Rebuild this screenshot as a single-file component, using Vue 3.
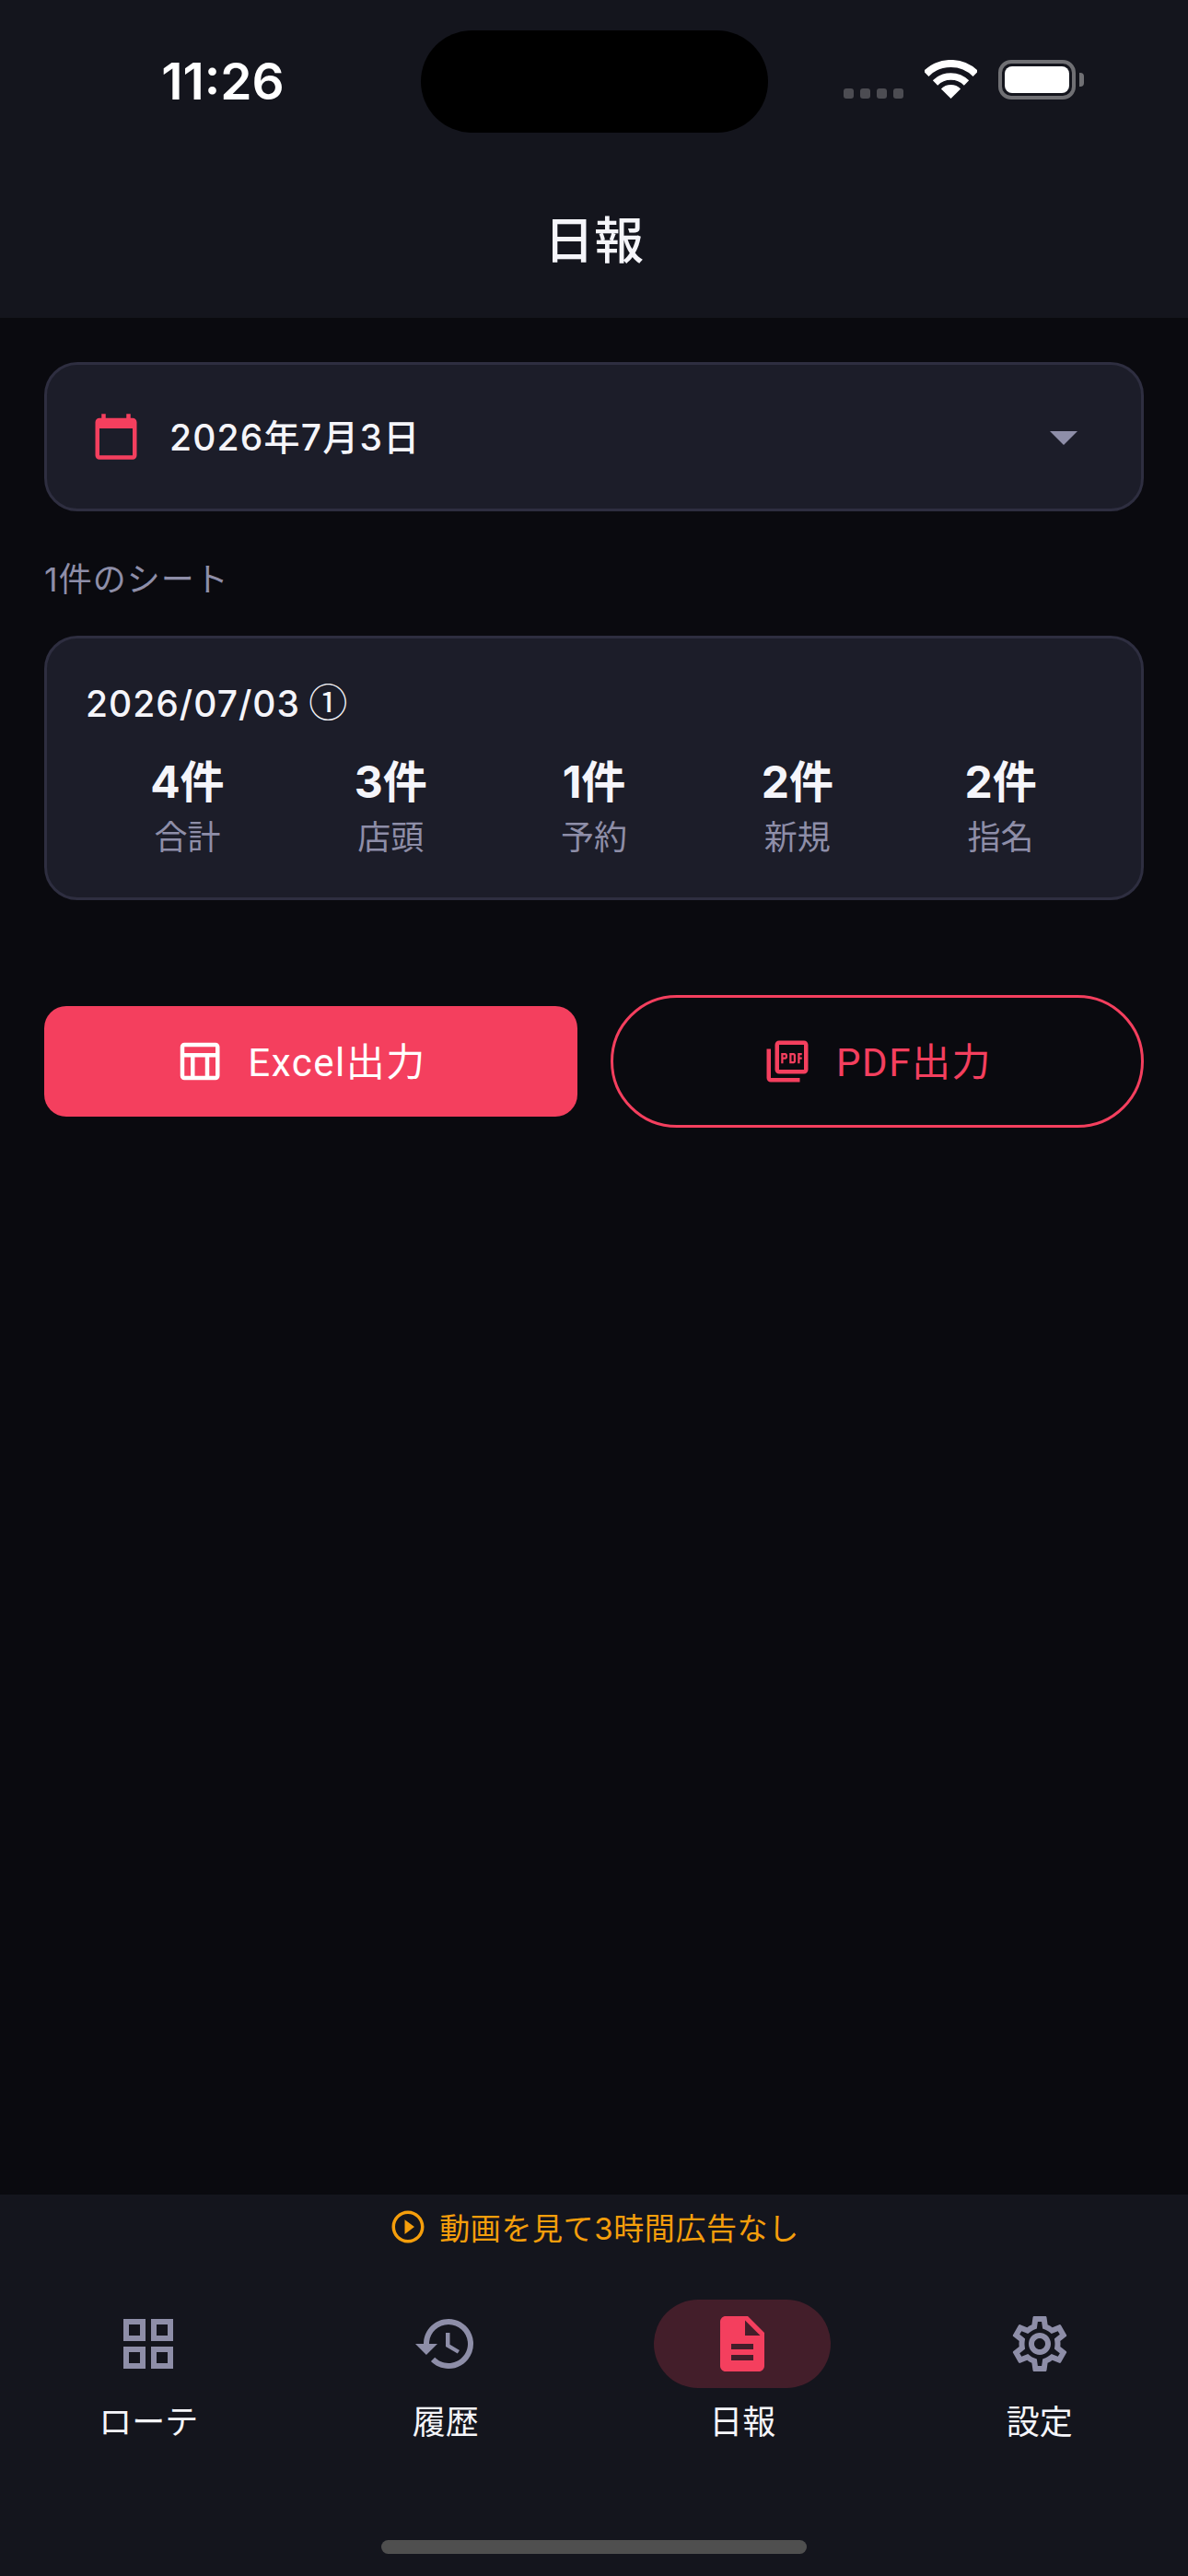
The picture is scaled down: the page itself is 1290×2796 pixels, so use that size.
<script setup>
const stats = [
  { value: "4件", label: "合計" },
  { value: "3件", label: "店頭" },
  { value: "1件", label: "予約" },
  { value: "2件", label: "新規" },
  { value: "2件", label: "指名" }
];

const tabs = [
  {
    label: "ローテ",
    path: "M3 3v8h8V3H3zm6 6H5V5h4v4zm-6 4v8h8v-8H3zm6 6H5v-4h4v4zm4-16v8h8V3h-8zm6 6h-4V5h4v4zm-6 4v8h8v-8h-8zm6 6h-4v-4h4v4z"
  },
  {
    label: "履歴",
    path: "M13 3c-4.97 0-9 4.03-9 9H1l3.89 3.89.07.14L9 12H6c0-3.87 3.13-7 7-7s7 3.13 7 7-3.13 7-7 7c-1.93 0-3.68-.79-4.94-2.06l-1.42 1.42C8.27 19.99 10.51 21 13 21c4.97 0 9-4.03 9-9s-4.03-9-9-9zm-1 5v5l4.28 2.54.72-1.21-3.5-2.08V8H12z"
  },
  {
    label: "日報",
    active: true,
    path: "M14 2H6c-1.1 0-1.99.9-1.99 2L4 20c0 1.1.89 2 1.99 2H18c1.1 0 2-.9 2-2V8l-6-6zm2 16H8v-2h8v2zm0-4H8v-2h8v2zm-3-5V3.5L18.5 9H13z"
  },
  {
    label: "設定",
    path: "M19.43 12.98c.04-.32.07-.64.07-.98 0-.34-.03-.66-.07-.98l2.11-1.65c.19-.15.24-.42.12-.64l-2-3.46c-.09-.16-.26-.25-.44-.25-.06 0-.12.01-.17.03l-2.49 1c-.52-.4-1.08-.73-1.69-.98l-.38-2.65C14.46 2.18 14.25 2 14 2h-4c-.25 0-.46.18-.49.42l-.38 2.65c-.61.25-1.17.59-1.69.98l-2.49-1c-.06-.02-.12-.03-.18-.03-.17 0-.34.09-.43.25l-2 3.46c-.13.22-.07.49.12.64l2.11 1.65c-.04.32-.07.65-.07.98 0 .33.03.66.07.98l-2.11 1.65c-.19.15-.24.42-.12.64l2 3.46c.09.16.26.25.44.25.06 0 .12-.01.17-.03l2.49-1c.52.4 1.08.73 1.69.98l.38 2.65c.03.24.24.42.49.42h4c.25 0 .46-.18.49-.42l.38-2.65c.61-.25 1.17-.59 1.69-.98l2.49 1c.06.02.12.03.18.03.17 0 .34-.09.43-.25l2-3.46c.12-.22.07-.49-.12-.64l-2.11-1.65zm-1.98-1.71c.04.31.05.52.05.73 0 .21-.02.43-.05.73l-.14 1.13.89.7 1.08.84-.7 1.21-1.27-.51-1.04-.42-.9.68c-.43.32-.84.56-1.25.73l-1.06.43-.16 1.13-.2 1.35h-1.4l-.19-1.35-.16-1.13-1.06-.43c-.43-.18-.83-.41-1.23-.71l-.91-.7-1.06.43-1.27.51-.7-1.21 1.08-.84.89-.7-.14-1.13c-.03-.31-.05-.54-.05-.74s.02-.43.05-.73l.14-1.13-.89-.7-1.08-.84.7-1.21 1.27.51 1.04.42.9-.68c.43-.32.84-.56 1.25-.73l1.06-.43.16-1.13.2-1.35h1.39l.19 1.35.16 1.13 1.06.43c.43.18.83.41 1.23.71l.91.7 1.06-.43 1.27-.51.7 1.21-1.07.85-.89.7.14 1.13zM12 8c-2.21 0-4 1.79-4 4s1.79 4 4 4 4-1.79 4-4-1.79-4-4-4zm0 6c-1.1 0-2-.9-2-2s.9-2 2-2 2 .9 2 2-.9 2-2 2z"
  }
];
</script>

<template>
  <div class="page">
    <header class="header">
      <div class="status">
        <div class="time-box"><span class="time">11:26</span></div>
        <div class="island"></div>
        <div class="status-icons">
          <div class="signal"><i></i><i></i><i></i><i></i></div>
          <svg class="wifi" viewBox="0 0 57 42" width="57" height="42">
            <path d="M1.6 15.1A38 38 0 0 1 55.4 15.1" fill="none" stroke="#fff" stroke-width="8" />
            <path d="M11.5 25A24 24 0 0 1 45.5 25" fill="none" stroke="#fff" stroke-width="7.5" />
            <path d="M28.5 42L17.9 31.4A15 15 0 0 1 39.1 31.4Z" fill="#fff" />
          </svg>
          <div class="battery">
            <div class="battery-body"><div class="battery-fill"></div></div>
            <div class="battery-nub"></div>
          </div>
        </div>
      </div>
      <h1 class="title">日報</h1>
    </header>

    <main class="content">
      <div class="date-select">
        <svg class="icon54" viewBox="0 0 24 24" fill="#f43f5e">
          <path d="M20 3h-1V1h-2v2H7V1H5v2H4c-1.1 0-2 .9-2 2v16c0 1.1.9 2 2 2h16c1.1 0 2-.9 2-2V5c0-1.1-.9-2-2-2zm0 18H4V8h16v13z" />
        </svg>
        <span class="date-text">2026年7月3日</span>
        <svg class="arrow" viewBox="0 0 24 24" fill="#8e8ea8">
          <path d="M7 10l5 5 5-5z" />
        </svg>
      </div>

      <p class="count">1件のシート</p>

      <section class="sheet">
        <div class="sheet-title">2026/07/03 <span class="circled">①</span></div>
        <div class="stats">
          <div v-for="s in stats" :key="s.label" class="stat">
            <div class="stat-value">{{ s.value }}</div>
            <div class="stat-label">{{ s.label }}</div>
          </div>
        </div>
      </section>

      <div class="actions">
        <button class="btn excel">
          <svg class="icon54" viewBox="0 0 24 24" fill="#fff">
            <path d="M20 3H5c-1.1 0-2 .9-2 2v14c0 1.1.9 2 2 2h15c1.1 0 2-.9 2-2V5c0-1.1-.9-2-2-2zm0 2v3H5V5h15zm-5 14h-5v-9h5v9zM5 10h3v9H5v-9zm12 9v-9h3v9h-3z" />
          </svg>
          <span>Excel出力</span>
        </button>
        <button class="btn pdf">
          <svg class="icon54" viewBox="0 0 24 24" fill="#f43f5e">
            <path d="M20 2H8c-1.1 0-2 .9-2 2v12c0 1.1.9 2 2 2h12c1.1 0 2-.9 2-2V4c0-1.1-.9-2-2-2zm0 14H8V4h12v12zM4 6H2v14c0 1.1.9 2 2 2h14v-2H4V6zm12 6V9c0-.55-.45-1-1-1h-2v5h2c.55 0 1-.45 1-1zm-2-3h1v3h-1V9zm4 2h1v-1h-1V9h1V8h-2v5h1v-2zm-8 0h1c.55 0 1-.45 1-1V9c0-.55-.45-1-1-1H9v5h1v-2zm0-2h1v1h-1V9z" />
          </svg>
          <span>PDF出力</span>
        </button>
      </div>
    </main>

    <footer class="footer">
      <div class="ad">
        <svg class="ad-icon" viewBox="0 0 24 24" fill="#f59e0b">
          <path d="M10 16.5l6-4.5-6-4.5v9zM12 2C6.48 2 2 6.48 2 12s4.48 10 10 10 10-4.48 10-10S17.52 2 12 2zm0 18c-4.41 0-8-3.59-8-8s3.59-8 8-8 8 3.59 8 8-3.59 8-8 8z" />
        </svg>
        <span>動画を見て3時間広告なし</span>
      </div>
      <nav class="tabs">
        <div v-for="t in tabs" :key="t.label" class="tab" :class="{ active: t.active }">
          <div class="tab-icon">
            <svg viewBox="0 0 24 24" width="72" height="72"><path :d="t.path" /></svg>
          </div>
          <div class="tab-label">{{ t.label }}</div>
        </div>
      </nav>
      <div class="home-bar"></div>
    </footer>
  </div>
</template>

<style scoped>
.page {
  width: 1290px;
  height: 2796px;
  display: flex;
  flex-direction: column;
  background: #0a0a0f;
  color: #f5f5fa;
  font-family: "Inter", "Noto Sans CJK JP", sans-serif;
}

.header {
  height: 345px;
  background: #14151d;
}

.status {
  height: 180px;
  display: flex;
  align-items: flex-start;
}

.time-box {
  width: 457px;
  padding-top: 54px;
  text-align: center;
}

.time {
  display: block;
  font-size: 55px;
  line-height: 68px;
  font-weight: 600;
  color: #fff;
  margin-left: 27px;
}

.island {
  width: 377px;
  height: 111px;
  margin-top: 33px;
  border-radius: 56px;
  background: #000;
}

.status-icons {
  display: flex;
  align-items: flex-end;
  height: 43px;
  margin-top: 65px;
  margin-left: 82px;
}

.signal {
  display: flex;
  gap: 7px;
  margin-bottom: 1px;
}

.signal i {
  width: 11px;
  height: 11px;
  border-radius: 3px;
  background: #4c4c52;
}

.wifi {
  margin-left: 23px;
  margin-bottom: 1px;
}

.battery {
  display: flex;
  align-items: center;
  margin-left: 23px;
}

.battery-body {
  width: 84px;
  height: 43px;
  box-sizing: border-box;
  padding: 3px;
  border: 4px solid #707074;
  border-radius: 14px;
}

.battery-fill {
  width: 100%;
  height: 100%;
  border-radius: 8px;
  background: #fff;
}

.battery-nub {
  width: 5px;
  height: 15px;
  margin-left: 4px;
  border-radius: 0 4px 4px 0;
  background: #707074;
}

.title {
  margin: 0;
  height: 164px;
  line-height: 164px;
  text-align: center;
  font-size: 54px;
  font-weight: 500;
}

.content {
  flex: 1;
  padding: 48px 48px 0;
}

.icon54 {
  width: 54px;
  height: 54px;
  flex: none;
}

.date-select {
  height: 162px;
  box-sizing: border-box;
  display: flex;
  align-items: center;
  padding: 0 48px;
  background: #1c1d29;
  border: 3px solid #2e2e40;
  border-radius: 36px;
}

.date-text {
  margin-left: 31px;
  padding-bottom: 4px;
  font-size: 39px;
  font-weight: 500;
  letter-spacing: 1.2px;
}

.arrow {
  width: 72px;
  height: 72px;
  margin-left: auto;
}

.count {
  margin: 50px 0 0;
  font-size: 36px;
  line-height: 48px;
  letter-spacing: 1px;
  color: #8e8ea8;
}

.sheet {
  margin-top: 37px;
  height: 287px;
  box-sizing: border-box;
  padding: 44px 42px 0;
  background: #1c1d29;
  border: 3px solid #2e2e40;
  border-radius: 36px;
}

.sheet-title {
  height: 54px;
  font-size: 39px;
  line-height: 54px;
  font-weight: 500;
  letter-spacing: 1px;
}

.circled {
  font-family: "Noto Sans CJK JP", sans-serif;
  font-size: 42px;
  line-height: 0;
  font-weight: 400;
  letter-spacing: 0;
  margin-left: -2px;
}

.stats {
  display: grid;
  grid-template-columns: repeat(5, 1fr);
  margin-top: 28px;
}

.stat {
  text-align: center;
}

.stat-value {
  font-size: 48px;
  line-height: 60px;
  font-weight: 700;
}

.stat-label {
  margin-top: 6px;
  font-size: 36px;
  line-height: 48px;
  color: #8e8ea8;
}

.actions {
  display: grid;
  grid-template-columns: 1fr 1fr;
  gap: 36px;
  align-items: center;
  margin-top: 103px;
}

.btn {
  display: flex;
  align-items: center;
  justify-content: center;
  gap: 26px;
  box-sizing: border-box;
  font-family: "Roboto", "Noto Sans CJK JP", sans-serif;
  font-size: 42px;
  font-weight: 400;
  letter-spacing: 1.5px;
  cursor: pointer;
}

.btn span {
  padding-bottom: 6px;
}

.excel {
  height: 120px;
  padding: 0 23px 0 0;
  border: 0;
  border-radius: 24px;
  background: #f43f5e;
  color: #fff;
}

.pdf {
  height: 144px;
  padding: 0;
  border: 3px solid #f43f5e;
  border-radius: 72px;
  background: transparent;
  color: #f43f5e;
}

.footer {
  height: 414px;
  background: #14151d;
  display: flex;
  flex-direction: column;
  align-items: center;
}

.ad {
  display: flex;
  align-items: center;
  gap: 13px;
  height: 48px;
  margin-top: 11px;
  font-size: 33px;
  letter-spacing: 0.6px;
  color: #f59e0b;
}

.ad-icon {
  width: 42px;
  height: 42px;
}

.tabs {
  display: grid;
  grid-template-columns: repeat(4, 1fr);
  width: 100%;
  margin-top: 55px;
}

.tab {
  display: flex;
  flex-direction: column;
  align-items: center;
}

.tab-icon {
  width: 192px;
  height: 96px;
  display: flex;
  align-items: center;
  justify-content: center;
  border-radius: 48px;
  fill: #8e8ea8;
}

.active .tab-icon {
  background: #431e2a;
  fill: #f43f5e;
}

.tab-label {
  margin-top: 13px;
  font-size: 36px;
  line-height: 48px;
  color: #f5f5fa;
}

.home-bar {
  width: 462px;
  height: 15px;
  margin-top: auto;
  margin-bottom: 24px;
  border-radius: 8px;
  background: #4f4f4f;
}
</style>

<style>
html,
body {
  margin: 0;
  background: #0a0a0f;
}
</style>
